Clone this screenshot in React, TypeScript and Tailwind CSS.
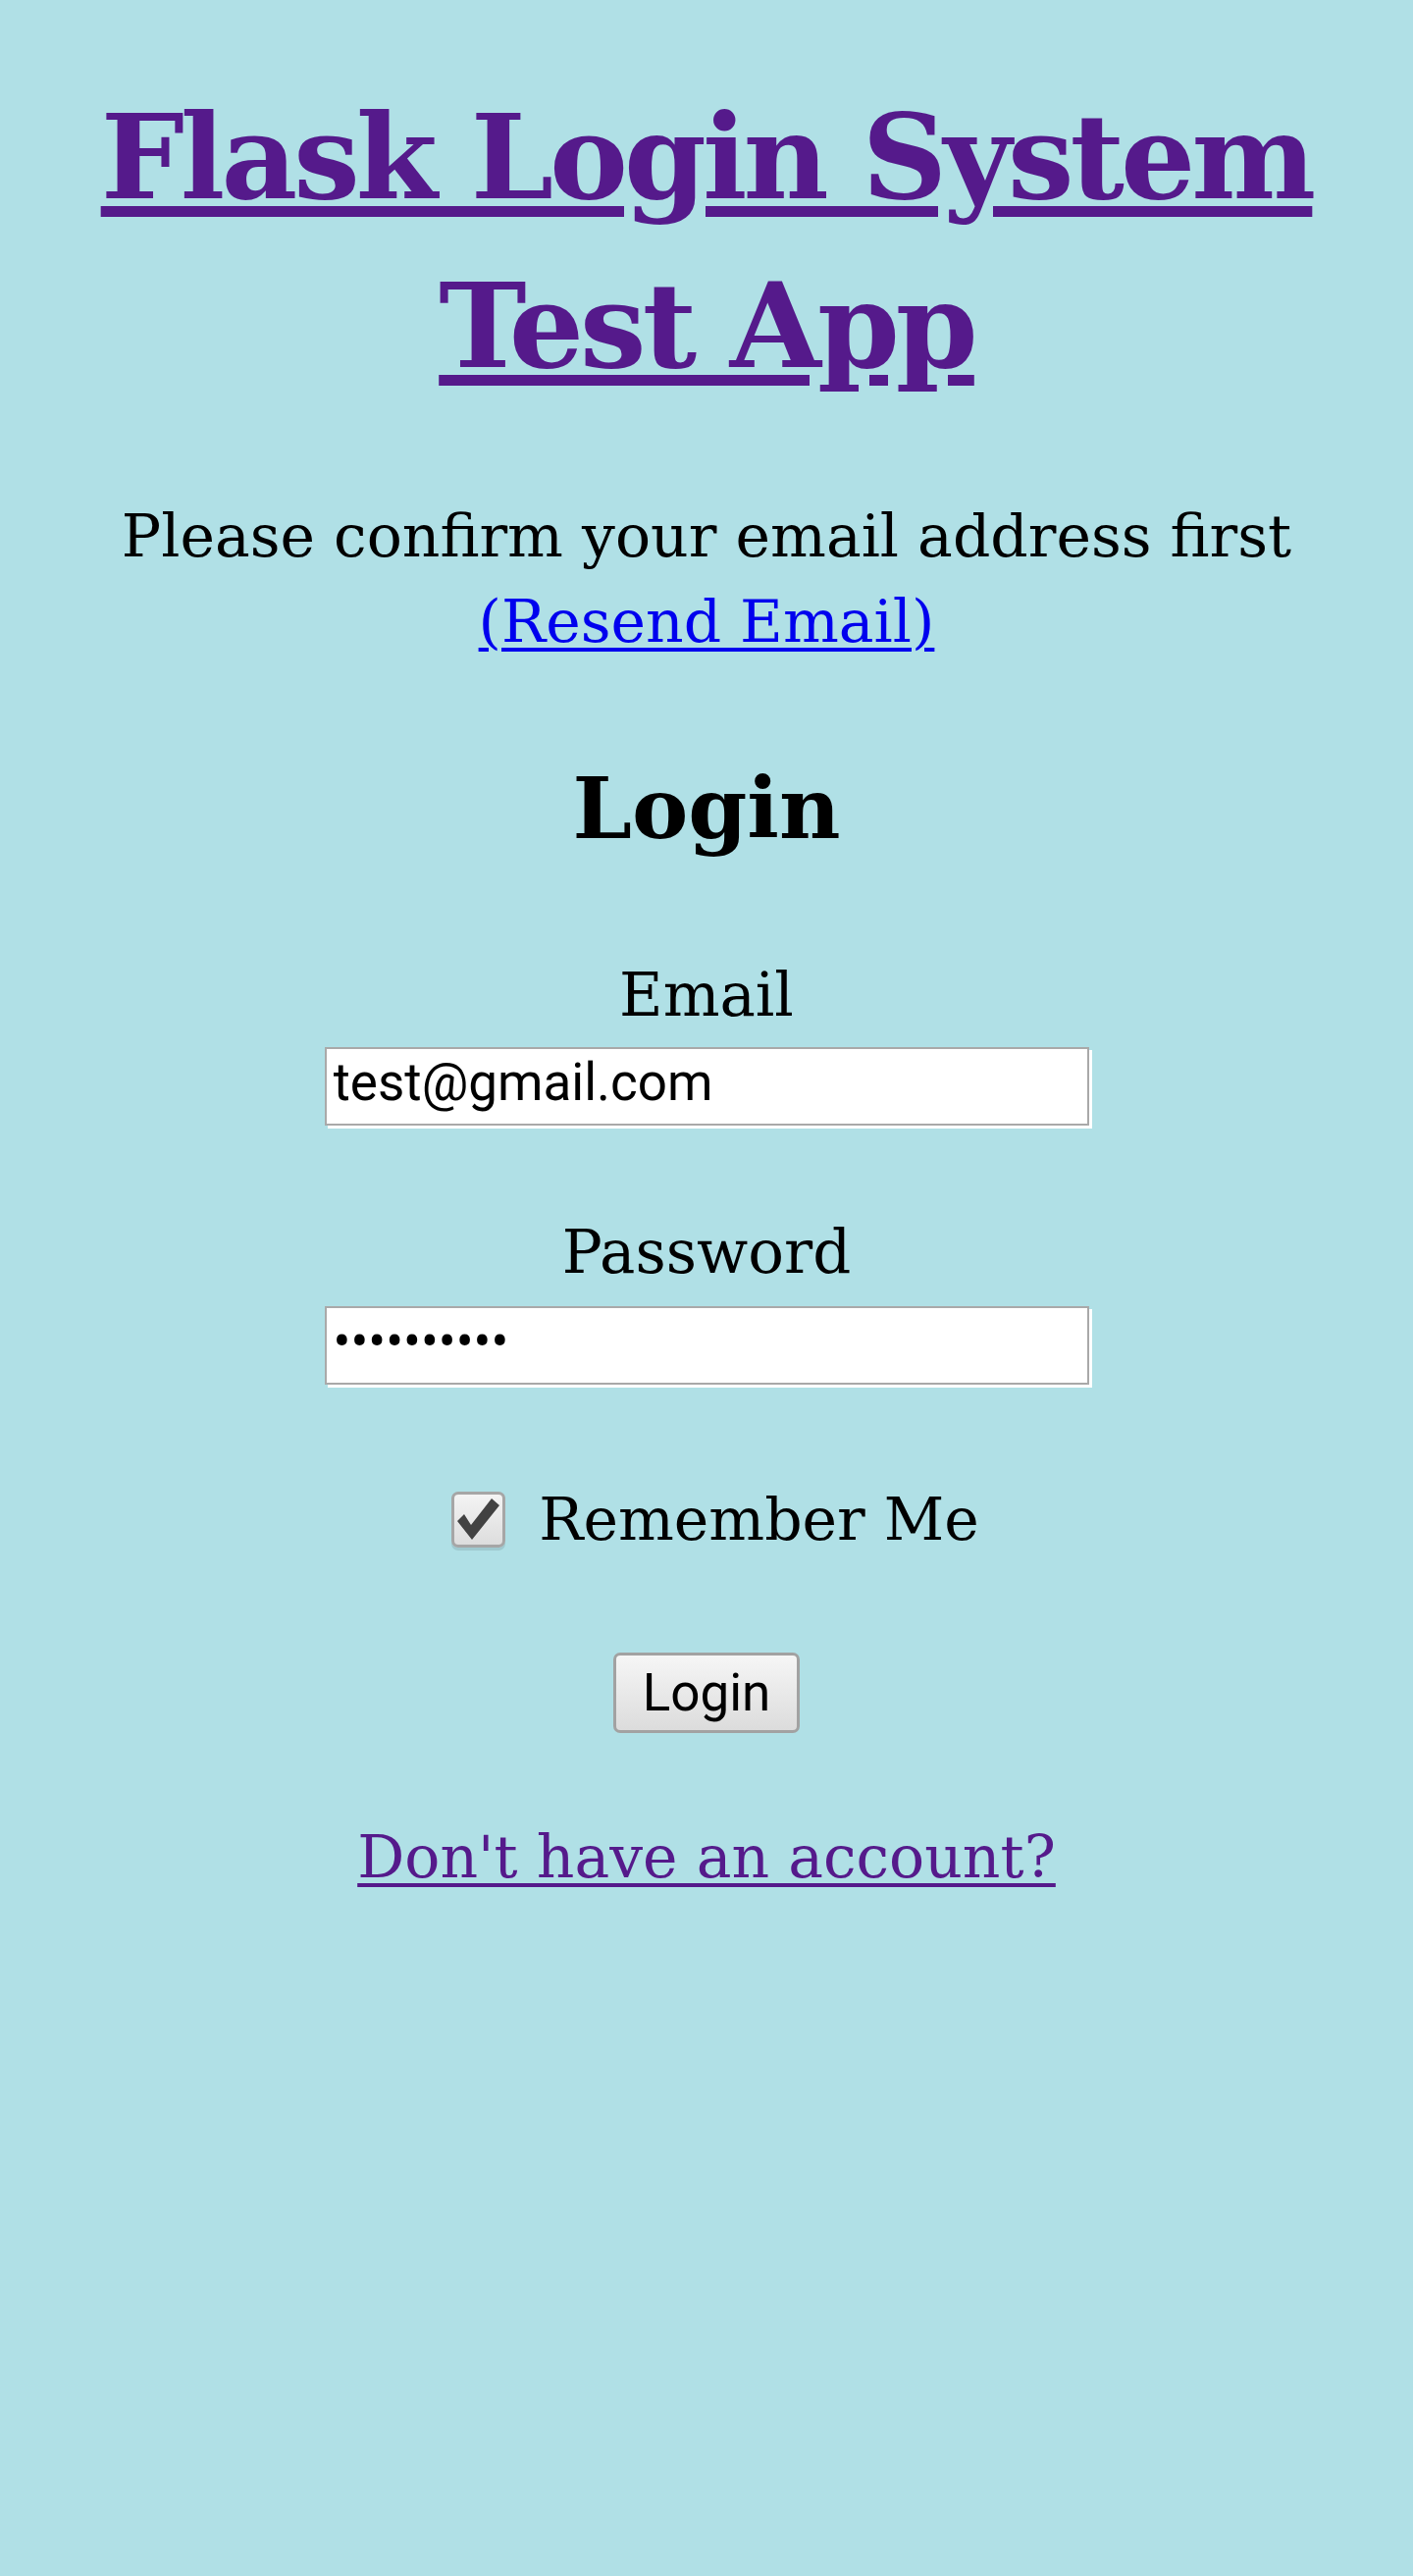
import { useState } from 'react'

const serif = "font-['DejaVu_Serif','Liberation_Serif',serif]"
const sans = "font-['Roboto','Liberation_Sans',sans-serif]"

function CheckBox({ checked, onToggle }: { checked: boolean; onToggle: () => void }) {
  return (
    <button
      type="button"
      onClick={onToggle}
      className="w-[55px] h-[57px] rounded-[7px] border-[3px] border-[#a6a6a6] bg-linear-to-b from-[#f4f4f4] to-[#dddddd] shadow-[0_3px_0_#9fc9cf] flex items-center justify-center"
    >
      {checked && (
        <svg viewBox="0 0 49 51" className="w-[49px] h-[51px]">
          <path d="M3 27 L10 20 L17 31 L38 4 L46 11 L18 46 Z" fill="#424242" />
        </svg>
      )}
    </button>
  )
}

export default function App() {
  const [remember, setRemember] = useState(true)

  return (
    <div className={`min-h-[2625px] bg-[#b0e0e6] text-center text-black ${serif}`}>
      {/* titre */}
      <h1 className="pt-[74px] text-[120px] leading-[172px] font-bold tracking-[-4px]">
        <a
          href="#"
          className="text-[#551a8b] underline decoration-[length:11px] underline-offset-[8px]"
        >
          <span className="whitespace-nowrap">Flask Login System</span>
          <br />
          Test App
        </a>
      </h1>

      {/* message de confirmation */}
      <p className="mt-[85px] text-[60px] leading-[87px]">
        Please confirm your email address first
        <br />
        <a href="#" className="text-[#0000ee] underline decoration-[length:4px] underline-offset-[6px]">
          (Resend Email)
        </a>
      </p>

      <h2 className="mt-[82px] text-[86px] leading-[130px] font-bold">Login</h2>

      {/* formulaire */}
      <form className="flex flex-col items-center" onSubmit={(e) => e.preventDefault()}>
        <label className="mt-[81px] text-[61px] leading-[87px]">Email</label>
        <input
          type="email"
          defaultValue="test@gmail.com"
          className={`mt-[10px] w-[779px] h-[80px] bg-white border-2 border-[#a9a9a9] shadow-[3px_3px_0_#ffffff] px-[7px] text-[53px] leading-[60px] pb-[8px] ${sans}`}
        />

        <label className="mt-[85px] text-[61px] leading-[87px]">Password</label>
        <input
          type="password"
          defaultValue="1234567890"
          className={`mt-[12px] w-[779px] h-[80px] bg-white border-2 border-[#a9a9a9] shadow-[3px_3px_0_#ffffff] px-[7px] text-[53px] leading-[60px] pb-[8px] ${sans}`}
        />

        <div className="mt-[94px] h-[87px] flex items-center gap-[34px] pl-[18px]">
          <CheckBox checked={remember} onToggle={() => setRemember(!remember)} />
          <span className="text-[60px] leading-[87px]">Remember Me</span>
        </div>

        <button
          type="submit"
          className={`mt-[92px] w-[190px] h-[82px] rounded-[7px] border-[3px] border-[#a2a2a2] bg-linear-to-b from-[#f6f6f6] to-[#dcdcdc] text-[53px] leading-[60px] ${sans}`}
        >
          Login
        </button>

        <a
          href="#"
          className="mt-[83px] text-[60px] leading-[87px] text-[#551a8b] underline decoration-[length:4px] underline-offset-[6px]"
        >
          Don't have an account?
        </a>
      </form>
    </div>
  )
}
